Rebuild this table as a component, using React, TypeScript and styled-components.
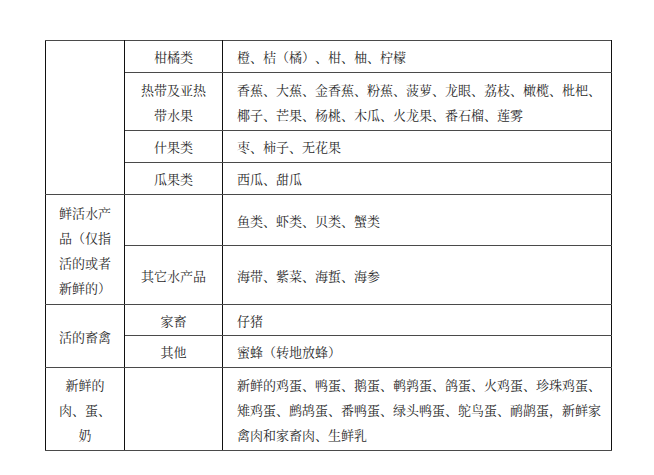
import React from 'react';
import styled, { createGlobalStyle } from 'styled-components';

const GlobalStyle = createGlobalStyle`
    html, body {
        margin: 0;
        padding: 0;
        background: #ffffff;
    }
    body {
        font-family: "Noto Serif CJK SC", "Noto Sans CJK SC", serif;
    }
`;

const Page = styled.div`
    width: 654px;
    height: 475px;
    padding: 40px 0 0 45px;
    box-sizing: border-box;
    overflow: hidden;
`;

const Table = styled.table`
    border-collapse: collapse;
    table-layout: fixed;
    width: 566px;
    border: 1.5px solid #7d7d7d;
    color: #2a2a2a;
    font-size: 13px;
    line-height: 25px;
    text-spacing-trim: space-all;
`;

const Row = styled.tr<{ $h: number }>`
    height: ${(p) => p.$h}px;
`;

const Cell = styled.td<{ $left?: boolean }>`
    border-top: 1px solid #4a4a4a;
    border-bottom: 1px solid #4a4a4a;
    border-left: 1px solid #111;
    border-right: 1px solid #111;
    padding: ${(p) => (p.$left ? '0 6px 0 14px' : '0 4px')};
    text-align: ${(p) => (p.$left ? 'left' : 'center')};
    vertical-align: middle;
    white-space: nowrap;
`;

const colWidths = [79, 98, 389];

type Line = string[];

interface Item {
    h: number;
    group?: { lines: Line; span: number };
    kind: Line;
    detail: Line;
}

const rows: Item[] = [
    { h: 32, group: { lines: [''], span: 4 }, kind: ['柑橘类'], detail: ['橙、桔（橘）、柑、柚、柠檬'] },
    {
        h: 58,
        kind: ['热带及亚热', '带水果'],
        detail: ['香蕉、大蕉、金香蕉、粉蕉、菠萝、龙眼、荔枝、橄榄、枇杷、', '椰子、芒果、杨桃、木瓜、火龙果、番石榴、莲雾'],
    },
    { h: 32, kind: ['什果类'], detail: ['枣、柿子、无花果'] },
    { h: 32, kind: ['瓜果类'], detail: ['西瓜、甜瓜'] },
    {
        h: 51,
        group: { lines: ['鲜活水产', '品（仅指', '活的或者', '新鲜的）'], span: 2 },
        kind: [''],
        detail: ['鱼类、虾类、贝类、蟹类'],
    },
    { h: 59, kind: ['其它水产品'], detail: ['海带、紫菜、海蜇、海参'] },
    { h: 31, group: { lines: ['活的畜禽'], span: 2 }, kind: ['家畜'], detail: ['仔猪'] },
    { h: 32, kind: ['其他'], detail: ['蜜蜂（转地放蜂）'] },
    {
        h: 83,
        group: { lines: ['新鲜的', '肉、蛋、', '奶'], span: 1 },
        kind: [''],
        detail: [
            '新鲜的鸡蛋、鸭蛋、鹅蛋、鹌鹑蛋、鸽蛋、火鸡蛋、珍珠鸡蛋、',
            '雉鸡蛋、鹧鸪蛋、番鸭蛋、绿头鸭蛋、鸵鸟蛋、鸸鹋蛋，新鲜家',
            '禽肉和家畜肉、生鲜乳',
        ],
    },
];

function Lines({ lines }: { lines: Line }) {
    return (
        <>
            {lines.map((l, i) => (
                <React.Fragment key={i}>
                    {i > 0 && <br />}
                    {l}
                </React.Fragment>
            ))}
        </>
    );
}

export default function App() {
    return (
        <Page>
            <GlobalStyle />
            <Table>
                <colgroup>
                    {colWidths.map((w, i) => (
                        <col key={i} style={{ width: w }} />
                    ))}
                </colgroup>
                <tbody>
                    {rows.map((r, i) => (
                        <Row $h={r.h} key={i}>
                            {r.group && (
                                <Cell rowSpan={r.group.span}>
                                    <Lines lines={r.group.lines} />
                                </Cell>
                            )}
                            <Cell>
                                <Lines lines={r.kind} />
                            </Cell>
                            <Cell $left>
                                <Lines lines={r.detail} />
                            </Cell>
                        </Row>
                    ))}
                </tbody>
            </Table>
        </Page>
    );
}
